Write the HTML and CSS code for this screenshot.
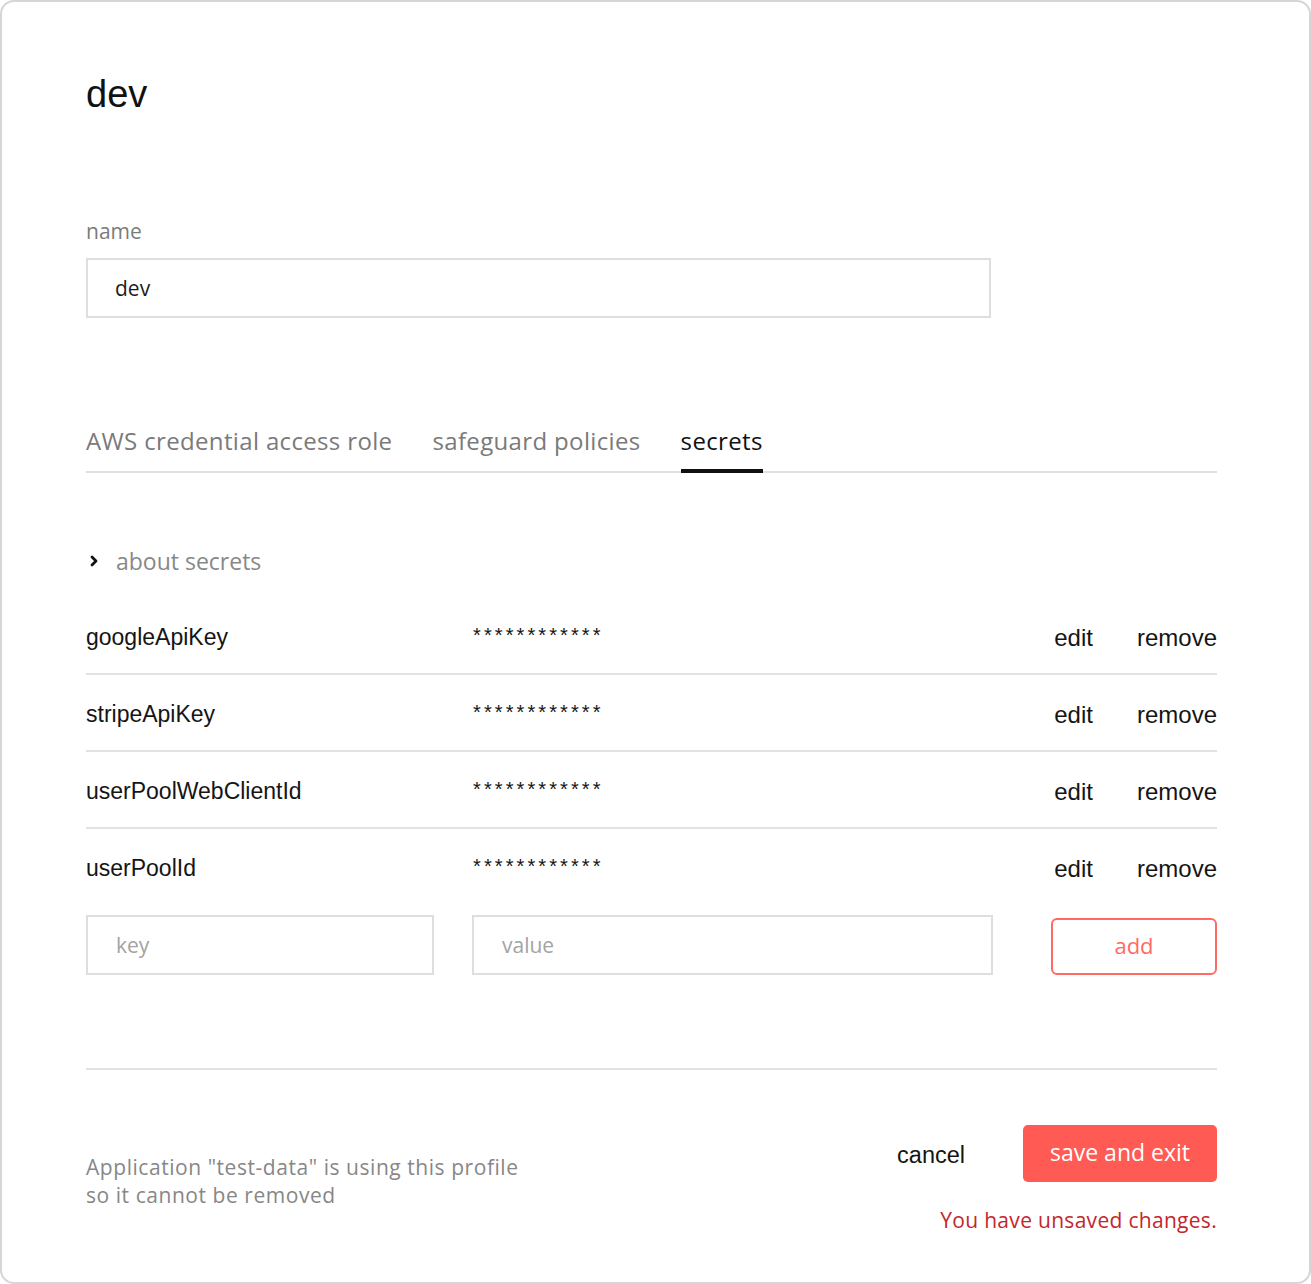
FILE: index.html
```html
<!DOCTYPE html>
<html lang="en">
<head>
<meta charset="utf-8">
<title>dev</title>
<link rel="stylesheet" href="styles.css">
</head>
<body>
<div class="frame">
  <h1 class="title">dev</h1>

  <div class="field">
    <label class="field-label">name</label>
    <div class="text-input filled">dev</div>
  </div>

  <nav class="tabs">
    <span class="tab">AWS credential access role</span>
    <span class="tab">safeguard policies</span>
    <span class="tab active">secrets</span>
  </nav>

  <div class="about">
    <svg class="chevron" width="10" height="14" viewBox="0 0 10 14"><path d="M3 3 L7 7 L3 11" fill="none" stroke="#111" stroke-width="2.8" stroke-linecap="round" stroke-linejoin="round"/></svg>
    <span>about secrets</span>
  </div>

  <div class="secrets">
    <div class="secret-row">
      <span class="secret-key">googleApiKey</span>
      <span class="secret-value">************</span>
      <span class="actions"><span>edit</span><span>remove</span></span>
    </div>
    <div class="secret-row">
      <span class="secret-key">stripeApiKey</span>
      <span class="secret-value">************</span>
      <span class="actions"><span>edit</span><span>remove</span></span>
    </div>
    <div class="secret-row">
      <span class="secret-key">userPoolWebClientId</span>
      <span class="secret-value">************</span>
      <span class="actions"><span>edit</span><span>remove</span></span>
    </div>
    <div class="secret-row last">
      <span class="secret-key">userPoolId</span>
      <span class="secret-value">************</span>
      <span class="actions"><span>edit</span><span>remove</span></span>
    </div>
  </div>

  <div class="new-secret">
    <div class="text-input placeholder">key</div>
    <div class="text-input placeholder">value</div>
    <button class="btn-outline">add</button>
  </div>

  <div class="divider"></div>

  <footer class="footer">
    <p class="note">Application "test-data" is using this profile<br>so it cannot be removed</p>
    <div class="footer-right">
      <div class="buttons">
        <button class="btn-text">cancel</button>
        <button class="btn-primary">save and exit</button>
      </div>
      <div class="warning">You have unsaved changes.</div>
    </div>
  </footer>
</div>
</body>
</html>
```

FILE: styles.css
```css
* { box-sizing: border-box; }

html, body {
  margin: 0;
  background: #fff;
}

body {
  font-family: "Open Sans", sans-serif;
  color: #1a1a1a;
}

.frame {
  width: 1311px;
  height: 1284px;
  border: 2px solid #d6d6d6;
  border-radius: 14px;
  padding: 69px 92px 0 84px;
  display: flex;
  flex-direction: column;
}

.title {
  margin: 0;
  font-family: "Liberation Sans", Arial, sans-serif;
  font-weight: 400;
  font-size: 38px;
  line-height: 46px;
  color: #111;
}

.field {
  margin-top: 100px;
  width: 905px;
}

.field-label {
  display: block;
  font-size: 21px;
  line-height: 28px;
  color: #7b7b7b;
  margin-bottom: 13px;
}

.text-input {
  height: 60px;
  border: 2px solid #dedede;
  display: flex;
  align-items: center;
  font-size: 21px;
  padding-left: 27px;
}

.text-input.filled { color: #1d1d1d; }
.text-input.placeholder { color: #a3a3a3; padding-left: 28px; }

.tabs {
  margin-top: 95px;
  display: flex;
  gap: 40px;
  border-bottom: 2px solid #e0e0e0;
  height: 60px;
  align-items: flex-start;
}

.tab {
  font-size: 24px;
  letter-spacing: 0.35px;
  line-height: 32px;
  padding-top: 12px;
  color: #7a7a7a;
  position: relative;
  height: 58px;
}

.tab.active {
  color: #111;
}

.tab.active::after {
  content: "";
  position: absolute;
  left: 0;
  right: 0;
  bottom: -2px;
  height: 4px;
  background: #111;
}

.about {
  margin-top: 72px;
  height: 32px;
  display: flex;
  align-items: center;
  gap: 17px;
  padding-left: 3px;
  font-size: 23px;
  color: #888;
}

.chevron { display: block; }

.secrets {
  margin-top: 21px;
}

.secret-row {
  height: 77px;
  padding-top: 4px;
  border-bottom: 2px solid #e2e2e2;
  display: grid;
  grid-template-columns: 387px 1fr auto;
  align-items: center;
  font-family: "Liberation Sans", Arial, sans-serif;
  font-size: 23px;
  color: #151515;
}

.secret-row.last {
  border-bottom: none;
  height: 75px;
}

.secret-value {
  font-size: 20px;
  letter-spacing: 3.1px;
  margin-top: -4px;
}

.actions {
  display: flex;
  gap: 44px;
  font-size: 24px;
}

.new-secret {
  margin-top: 11px;
  display: grid;
  grid-template-columns: 348px 521px 1fr;
  column-gap: 38px;
  align-items: start;
}

.btn-outline {
  justify-self: end;
  margin-top: 3px;
  width: 166px;
  height: 57px;
  border: 2px solid #ff6b64;
  border-radius: 6px;
  background: #fff;
  color: #ff6b64;
  font-family: "Open Sans", sans-serif;
  font-size: 22px;
  padding: 0 0 3px;
}

.divider {
  margin-top: 93px;
  height: 2px;
  background: #e2e2e2;
}

.footer {
  margin-top: 55px;
  display: flex;
  justify-content: space-between;
  align-items: flex-start;
}

.note {
  margin: 28px 0 0;
  font-size: 21px;
  letter-spacing: 0.55px;
  line-height: 28px;
  color: #878787;
}

.footer-right {
  display: flex;
  flex-direction: column;
  align-items: flex-end;
}

.buttons {
  display: flex;
  align-items: center;
  gap: 58px;
}

.btn-text {
  border: none;
  background: none;
  padding: 0;
  margin-top: 3px;
  font-family: "Liberation Sans", Arial, sans-serif;
  font-size: 23.5px;
  color: #151515;
}

.btn-primary {
  width: 194px;
  height: 57px;
  border: none;
  border-radius: 5px;
  background: #ff5a54;
  color: #fff;
  font-family: "Open Sans", sans-serif;
  font-size: 23px;
  padding: 0 0 4px;
}

.warning {
  margin-top: 24px;
  font-size: 21px;
  letter-spacing: 0.3px;
  line-height: 28px;
  color: #c4262c;
}
```
